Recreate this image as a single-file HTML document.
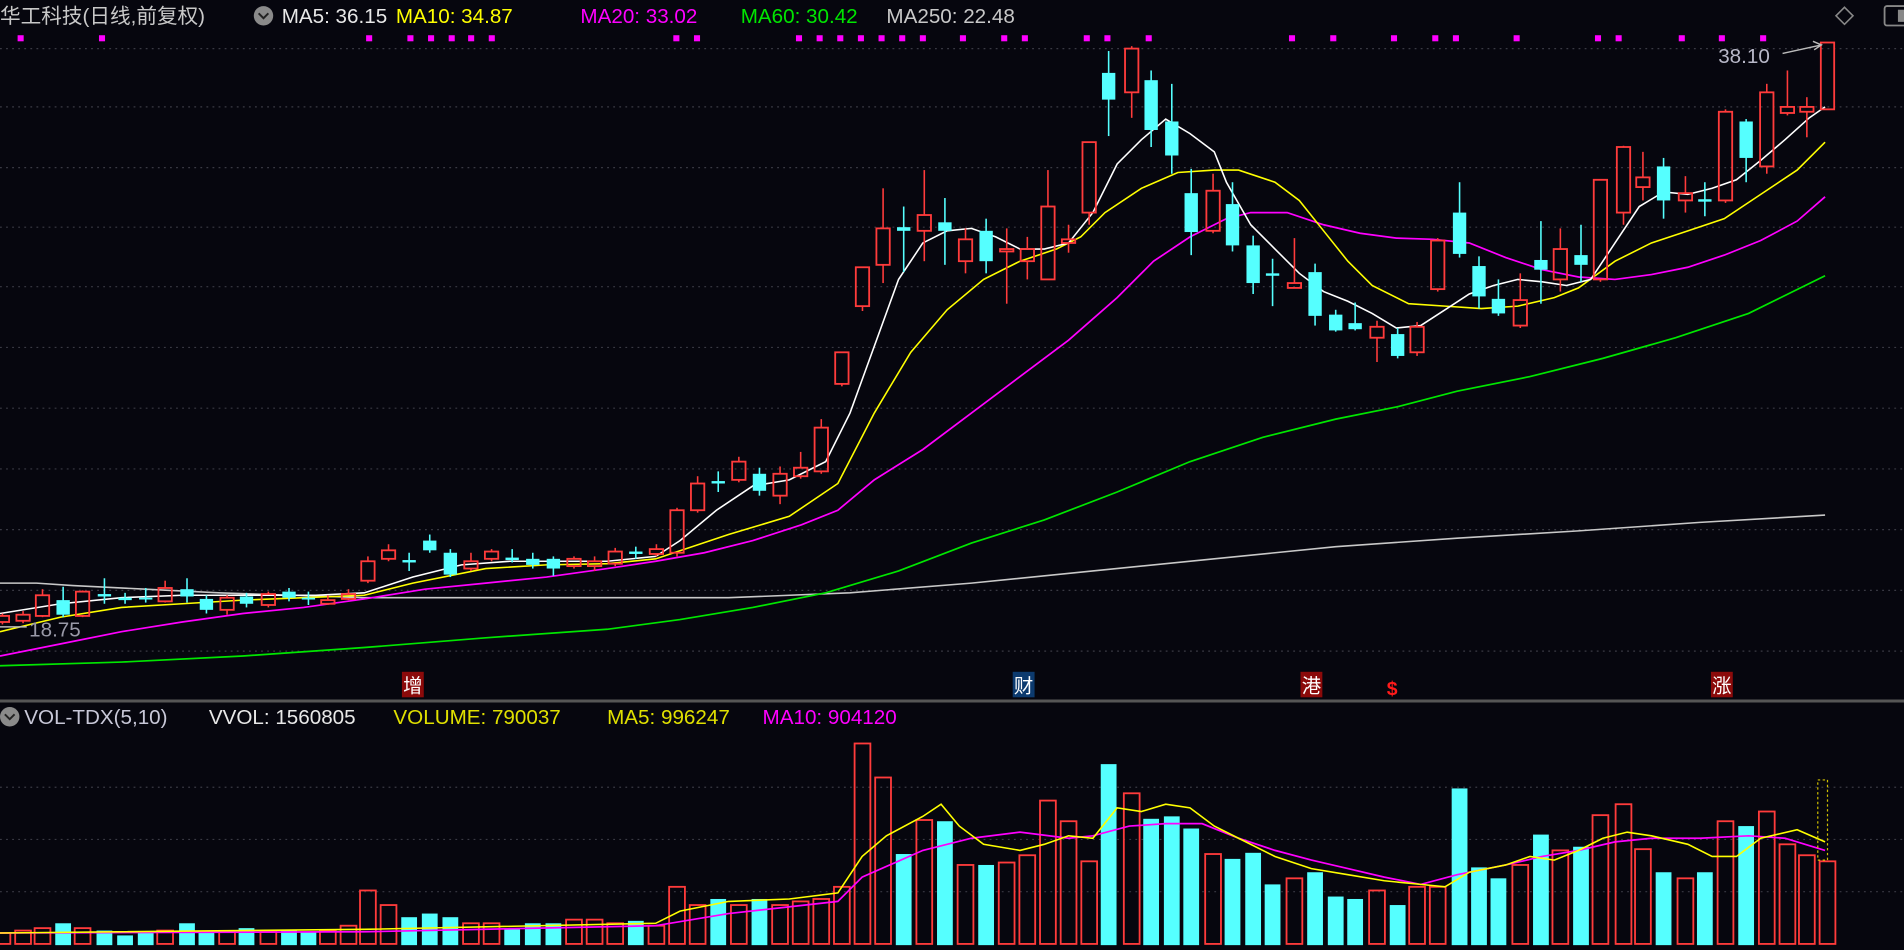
<!DOCTYPE html>
<html><head><meta charset="utf-8"><style>
html,body{margin:0;padding:0;background:#06060e;overflow:hidden}
svg{display:block}
text{font-family:"Liberation Sans","Noto Sans CJK SC",sans-serif}
</style></head><body>
<svg id="s" width="1904" height="950" viewBox="0 0 1568 782" preserveAspectRatio="none" xmlns="http://www.w3.org/2000/svg">
<rect width="1568" height="782" fill="#06060e"/>
<g id="grid"></g>
<g id="lines"></g>
<g id="cand"></g>
<g id="vol"></g>
<g id="vlines"></g>
<line x1="0" y1="577" x2="1568" y2="577" stroke="#555" stroke-width="2.5"/>
<text x="0" y="19" font-size="17" fill="#c8c8c8">华工科技(日线,前复权)</text>
<circle cx="217" cy="13" r="8" fill="#8a8a8a"/>
<path d="M213 11 L217 15 L221 11" stroke="#222" stroke-width="1.6" fill="none"/>
<text x="232" y="19" font-size="17" fill="#e8e8e8">MA5: 36.15</text>
<text x="326" y="19" font-size="17" fill="#ffff00">MA10: 34.87</text>
<text x="478" y="19" font-size="17" fill="#ff00ff">MA20: 33.02</text>
<text x="610" y="19" font-size="17" fill="#00e600">MA60: 30.42</text>
<text x="730" y="19" font-size="17" fill="#c8c8c8">MA250: 22.48</text>
<path d="M1519 6 L1526 13 L1519 20 L1512 13 Z" stroke="#888" stroke-width="1.3" fill="none"/>
<rect x="1552" y="5" width="20" height="16" rx="2" stroke="#888" stroke-width="1.5" fill="none"/>
<rect x="1563" y="8" width="5" height="10" fill="#888"/>
<text x="1415" y="52" font-size="17" fill="#b8b8c8">38.10</text>
<path d="M1468 44 L1500 37 M1493 34 L1500 37 L1494 41" stroke="#bbb" stroke-width="1.2" fill="none"/>
<text x="24" y="524" font-size="17" fill="#9a9aa8">18.75</text>
<line x1="0" y1="516" x2="22" y2="516" stroke="#bbb" stroke-width="1.2"/>
<rect x="331" y="553" width="18" height="21" fill="#8b0a0a"/><text x="332" y="570" font-size="16" fill="#fff">增</text>
<rect x="834" y="553" width="18" height="21" fill="#0c3a6e"/><text x="835" y="570" font-size="16" fill="#fff">财</text>
<rect x="1071" y="553" width="18" height="21" fill="#8b0a0a"/><text x="1072" y="570" font-size="16" fill="#fff">港</text>
<text x="1142" y="572" font-size="16" fill="#ff1a1a" font-weight="bold">$</text>
<rect x="1409" y="553" width="18" height="21" fill="#8b0a0a"/><text x="1410" y="570" font-size="16" fill="#fff">涨</text>
<circle cx="8" cy="590" r="8" fill="#8a8a8a"/>
<path d="M4 588 L8 592 L12 588" stroke="#222" stroke-width="1.6" fill="none"/>
<text x="20" y="596" font-size="17" fill="#c8c8d8">VOL-TDX(5,10)</text>
<text x="172" y="596" font-size="17" fill="#e8e8e8">VVOL: 1560805</text>
<text x="324" y="596" font-size="17" fill="#e0e000">VOLUME: 790037</text>
<text x="500" y="596" font-size="17" fill="#e0e000">MA5: 996247</text>
<text x="628" y="596" font-size="17" fill="#ff00ff">MA10: 904120</text>
<rect x="1497" y="642" width="8" height="66" fill="none" stroke="#d0c000" stroke-width="1" stroke-dasharray="2,2"/>
</svg>
<script>
const NS="http://www.w3.org/2000/svg";
function el(p,t,a){const e=document.createElementNS(NS,t);for(const k in a)e.setAttribute(k,a[k]);document.getElementById(p).appendChild(e);return e;}
[40,88,138,187,236,286,336,386,436,486,536,648,691,734].forEach(y=>el('grid','line',{x1:0,y1:y,x2:1568,y2:y,stroke:'#3a3a44','stroke-width':1,'stroke-dasharray':'1.5,3.5'}));
[17,84,304,338,355,372,388,405,557,574,658,675,692,709,726,743,760,793,827,844,895,912,946,1064,1098,1148,1182,1199,1249,1316,1333,1385,1418,1452].forEach(x=>el('grid','rect',{x:x-2.5,y:29,width:5,height:5,fill:'#ff00ff'}));
const E=[
[2,'R',507,512,505,514],[19,'R',506,511,503,513],[35,'R',490,507,485,508],[52,'C',494,506,483,508],[68,'R',487,507,486,508],
[86,'C',489,491,476,497],[103,'C',492,494,488,497],[120,'C',492,493,484,496],[136,'R',484,495,478,496],[154,'C',485,491,476,496],
[170,'C',493,502,490,505],[187,'R',492,502,490,506],[203,'C',491,497,488,500],[221,'R',489,498,487,500],[238,'C',487,492,484,495],
[254,'C',492,493,487,498],[270,'R',494,497,490,498],[287,'R',489,493,485,494]];
const M=[
['R',462,478,458,480],['R',453,460,448,462],['C',461,463,455,470],['C',445,453,440,455],['C',455,473,452,475],
['R',462,468,455,470],['R',454,460,452,462],['C',459,461,452,463],['C',460,465,455,468],['C',460,468,458,474],
['R',460,466,458,468],['R',462,466,458,470],['R',454,464,451,466],['C',454,456,450,460],['R',452,456,448,458],
['R',420,455,418,458],['R',398,420,392,422],['C',396,398,388,405],['R',380,395,376,397],['C',390,404,385,408],
['R',390,408,384,415],['R',385,392,372,394],['R',352,388,345,390],['R',290,316,290,318],['R',220,252,220,256],
['R',188,218,155,233],['C',187,190,170,224],['R',177,190,140,215],['C',183,190,163,218],['R',197,215,188,225],
['C',190,215,180,225],['R',205,207,188,250],['R',205,215,195,230],['R',170,230,140,230],['R',197,200,185,208],
['R',117,175,117,185]];
const C=E.slice();
M.forEach((m,k)=>C.push([303+16.97*k].concat(m)));
[[913,'C',60,82,42,112],[932,'R',40,76,38,97],[948,'C',66,107,58,121],[965,'C',100,128,69,143],
[981,'C',159,191,139,210],[999,'R',157,190,143,192],[1015,'C',168,202,150,207],[1032,'C',202,233,194,242],[1048,'C',225,227,213,252],
[1066,'R',233,237,196,237],[1083,'C',224,260,217,268],[1100,'C',259,272,255,273],[1116,'C',266,271,249,272],
[1134,'R',269,278,264,298],[1151,'C',275,293,270,295],[1167,'R',269,290,265,293],[1184,'R',198,238,196,240],[1202,'C',175,209,150,212],
[1218,'C',219,244,211,254],[1234,'C',246,258,230,260],[1252,'R',247,268,225,270],[1269,'C',214,222,182,250],[1285,'R',205,230,188,240],
[1302,'C',210,218,185,232],[1318,'R',148,230,148,232],[1337,'R',121,175,120,185],[1353,'R',146,154,125,165],[1370,'C',137,165,130,180],
[1388,'R',159,165,145,175],[1404,'C',164,166,150,178],[1421,'R',92,165,90,167],[1438,'C',100,130,98,150],[1455,'R',76,137,69,143],
[1472,'R',88,93,58,95],[1488,'R',88,92,80,113],[1505,'R',35,90,35,90]].forEach(c=>C.push(c));
const RED='#ff3b3b',CY='#55ffff';
C.forEach(c=>{const[x,t,tp,bt,h,l]=c;const col=t=='R'?RED:CY;
 if(t=='R'){el('cand','line',{x1:x,y1:h,x2:x,y2:tp,stroke:col,'stroke-width':1.3});el('cand','line',{x1:x,y1:bt,x2:x,y2:l,stroke:col,'stroke-width':1.3});
  el('cand','rect',{x:x-5.5,y:tp,width:11,height:Math.max(bt-tp,1.5),fill:'none',stroke:col,'stroke-width':1.5});}
 else{el('cand','line',{x1:x,y1:h,x2:x,y2:l,stroke:col,'stroke-width':1.3});el('cand','rect',{x:x-5.5,y:tp,width:11,height:Math.max(bt-tp,1.5),fill:col});}
});
function pl(g,pts,col,w){el(g,'polyline',{points:pts.map(p=>p.join(',')).join(' '),fill:'none',stroke:col,'stroke-width':w});}
pl('lines',[[0,480],[30,480],[60,482],[120,485],[180,488],[240,490],[300,492],[400,492],[600,492],[700,488],[800,480],[900,470],[1000,460],[1100,450],[1200,443],[1300,437],[1400,430],[1503,424]],'#c8c8c8',1.3);
pl('lines',[[0,548],[100,545],[200,540],[300,533],[400,525],[500,518],[560,510],[620,500],[680,488],[740,470],[800,447],[860,428],[920,405],[980,380],[1040,360],[1100,345],[1150,335],[1200,322],[1260,310],[1320,295],[1380,278],[1440,258],[1503,227]],'#00e600',1.4);
pl('lines',[[0,540],[50,530],[100,520],[150,512],[200,505],[250,500],[300,493],[350,485],[400,480],[450,475],[500,468],[540,462],[580,455],[620,445],[660,432],[690,420],[720,395],[760,370],[800,340],[840,310],[880,280],[920,245],[950,215],[980,195],[1010,180],[1030,175],[1060,175],[1090,185],[1120,192],[1150,196],[1180,197],[1210,200],[1240,212],[1270,222],[1300,228],[1330,230],[1360,226],[1390,220],[1420,210],[1450,198],[1480,182],[1503,162]],'#ff00ff',1.4);
pl('lines',[[0,520],[50,508],[100,500],[150,497],[200,494],[250,492],[300,490],[340,480],[400,468],[450,465],[500,464],[540,460],[600,440],[650,425],[690,398],[720,340],[750,290],[780,255],[810,230],[840,215],[870,205],[890,195],[910,175],[940,155],[970,142],[1000,140],[1020,140],[1050,150],[1070,165],[1090,190],[1110,215],[1130,235],[1160,250],[1190,252],[1220,254],[1250,252],[1280,245],[1300,237],[1330,215],[1360,200],[1390,190],[1420,180],[1450,160],[1480,140],[1503,117]],'#ffff00',1.3);
pl('lines',[[0,505],[50,497],[100,492],[150,490],[200,490],[260,490],[300,488],[340,475],[380,465],[420,462],[460,462],[500,462],[540,458],[560,445],[590,420],[620,400],[650,395],[680,380],[700,340],[720,285],[740,230],[760,200],[780,190],[800,188],[820,195],[840,205],[860,205],[880,200],[900,175],[920,135],[940,115],[960,98],[980,110],[1000,125],[1010,150],[1030,185],[1050,205],[1070,225],[1090,240],[1110,248],[1130,258],[1150,270],[1170,268],[1190,255],[1210,242],[1230,235],[1250,230],[1270,232],[1290,235],[1310,230],[1330,200],[1350,170],[1370,158],[1390,160],[1410,155],[1430,148],[1450,132],[1470,115],[1490,97],[1503,88]],'#ffffff',1.3);
// volume
const V=[768,766,764,760,764,766,770,768,766,760,766,767,764,767,766,767,766,762,
733,745,755,752,755,760,760,765,760,760,757,757,760,758,762,730,745,740,745,740,745,742,740,730,612,640,703,675,676,712,712];
const VB=[];
for(let i=0;i<49;i++)VB.push([C[i][0],C[i][1],V[i]]);
[[829,'R',710],[846,'R',704],[863,'R',659],[880,'R',676],[897,'R',709],[913,'C',629],[932,'R',653],[948,'C',674],[965,'C',672],[981,'C',682],
[999,'R',703],[1015,'C',707],[1032,'C',702],[1048,'C',728],[1066,'R',723],[1083,'C',718],[1100,'C',738],[1116,'C',740],[1134,'R',733],[1151,'C',745],
[1167,'R',730],[1184,'R',730],[1202,'C',649],[1218,'C',714],[1234,'C',723],[1252,'R',712],[1269,'C',687],[1285,'R',700],[1302,'C',697],[1318,'R',671],
[1337,'R',662],[1353,'R',699],[1370,'C',718],[1388,'R',723],[1404,'C',718],[1421,'R',676],[1438,'C',680],[1455,'R',668],[1472,'R',695],[1488,'R',704],[1505,'R',709]].forEach(v=>VB.push(v));
VB.forEach(v=>{const[x,t,top]=v;const col=t=='R'?RED:CY;
 if(t=='R')el('vol','rect',{x:x-6.5,y:top,width:13,height:777-top,fill:'none',stroke:col,'stroke-width':1.5});
 else el('vol','rect',{x:x-6.5,y:top,width:13,height:778-top,fill:col});});
pl('vlines',[[0,768],[300,767],[540,762],[600,752],[690,742],[710,722],[760,700],[800,690],[840,685],[880,690],[900,688],[930,680],[960,678],[990,678],[1020,690],[1050,700],[1080,708],[1110,715],[1140,722],[1170,728],[1200,720],[1240,712],[1270,705],[1300,700],[1330,693],[1360,690],[1400,690],[1440,688],[1470,690],[1503,700]],'#ff00ff',1.4);
pl('vlines',[[0,768],[300,765],[540,760],[560,750],[600,742],[650,740],[690,735],[710,705],[730,688],[760,672],[775,662],[790,680],[810,695],[840,700],[860,695],[880,688],[900,690],[920,665],[940,668],[960,662],[980,665],[1000,680],[1020,690],[1050,705],[1080,715],[1110,720],[1140,725],[1170,728],[1190,730],[1210,718],[1240,712],[1260,705],[1280,708],[1300,700],[1320,690],[1340,685],[1360,688],[1390,695],[1410,705],[1430,705],[1450,690],[1480,683],[1503,693]],'#ffff00',1.3);
</script>
</body></html>
